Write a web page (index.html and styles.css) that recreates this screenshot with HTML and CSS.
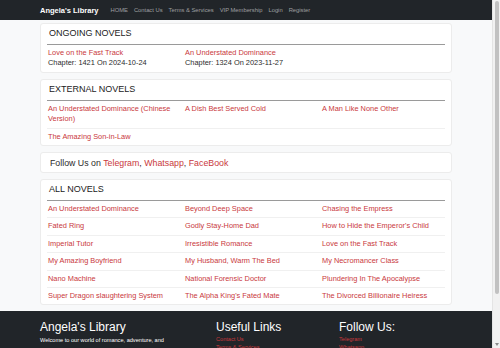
FILE: index.html
```html
<!DOCTYPE html>
<html lang="en">
<head>
    <meta charset="UTF-8">
    <meta name="viewport" content="width=device-width, initial-scale=1.0">
    <title>Angela's Library</title>
    <link rel="stylesheet" href="styles.css">
</head>
<body>

    <nav class="topbar">
        <div class="container topbar-inner">
            <a class="brand" href="#">Angela's Library</a>
            <div class="nav-links">
                <a href="#">HOME</a>
                <a href="#">Contact Us</a>
                <a href="#">Terms &amp; Services</a>
                <a href="#">VIP Membership</a>
                <a href="#">Login</a>
                <a href="#">Register</a>
            </div>
        </div>
    </nav>

    <main class="container">
        <section class="card">
            <h2 class="card-title">ONGOING NOVELS</h2>
            <div class="novel-grid">
                <div class="cell">
                    <a href="#">Love on the Fast Track</a>
                    <div class="chapter">Chapter: 1421 On 2024-10-24</div>
                </div>
                <div class="cell">
                    <a href="#">An Understated Dominance</a>
                    <div class="chapter">Chapter: 1324 On 2023-11-27</div>
                </div>
            </div>
        </section>

        <section class="card">
            <h2 class="card-title">EXTERNAL NOVELS</h2>
            <div class="novel-grid lined">
                <div class="cell"><a href="#">An Understated Dominance (Chinese Version)</a></div>
                <div class="cell"><a href="#">A Dish Best Served Cold</a></div>
                <div class="cell"><a href="#">A Man Like None Other</a></div>
                <div class="cell last"><a href="#">The Amazing Son-in-Law</a></div>
            </div>
        </section>

        <section class="card follow">
            Follow Us on <a href="#">Telegram</a>, <a href="#">Whatsapp</a>, <a href="#">FaceBook</a>
        </section>

        <section class="card">
            <h2 class="card-title">ALL NOVELS</h2>
            <div class="novel-grid lined">
                <div class="cell"><a href="#">An Understated Dominance</a></div>
                <div class="cell"><a href="#">Beyond Deep Space</a></div>
                <div class="cell"><a href="#">Chasing the Empress</a></div>
                <div class="cell"><a href="#">Fated Ring</a></div>
                <div class="cell"><a href="#">Godly Stay-Home Dad</a></div>
                <div class="cell"><a href="#">How to Hide the Emperor's Child</a></div>
                <div class="cell"><a href="#">Imperial Tutor</a></div>
                <div class="cell"><a href="#">Irresistible Romance</a></div>
                <div class="cell"><a href="#">Love on the Fast Track</a></div>
                <div class="cell"><a href="#">My Amazing Boyfriend</a></div>
                <div class="cell"><a href="#">My Husband, Warm The Bed</a></div>
                <div class="cell"><a href="#">My Necromancer Class</a></div>
                <div class="cell"><a href="#">Nano Machine</a></div>
                <div class="cell"><a href="#">National Forensic Doctor</a></div>
                <div class="cell"><a href="#">Plundering In The Apocalypse</a></div>
                <div class="cell last"><a href="#">Super Dragon slaughtering System</a></div>
                <div class="cell last"><a href="#">The Alpha King's Fated Mate</a></div>
                <div class="cell last"><a href="#">The Divorced Billionaire Heiress</a></div>
            </div>
        </section>
    </main>

    <footer class="footer">
        <div class="container footer-cols">
            <div>
                <h3>Angela's Library</h3>
                <p>Welcome to our world of romance, adventure, and fantasy. Dive into captivating stories and find your next favourite novel.</p>
            </div>
            <div>
                <h3>Useful Links</h3>
                <ul>
                    <li><a href="#">Contact Us</a></li>
                    <li><a href="#">Terms &amp; Services</a></li>
                    <li><a href="#">VIP Membership</a></li>
                </ul>
            </div>
            <div>
                <h3>Follow Us:</h3>
                <ul>
                    <li><a href="#">Telegram</a></li>
                    <li><a href="#">Whatsapp</a></li>
                    <li><a href="#">FaceBook</a></li>
                </ul>
            </div>
        </div>
        <p class="copyright">© 2024 Angela's Library. All rights reserved.</p>
    </footer>

    <!-- window scrollbar, drawn since the headless browser hides it -->
    <div class="scrollbar">
        <div class="scroll-thumb"></div>
        <div class="scroll-arrow"></div>
    </div>

</body>
</html>
```

FILE: styles.css
```css
:root {
    --dark: #212529;
    --red: #c9383c;
    --text: #2b2b2b;
    --page: #f8f9fa;
    --line: #f0f0f0;
}

body {
    margin: 0 8px 0 0;
    font-family: "Liberation Sans", Arial, sans-serif;
    background: var(--page);
    color: var(--text);
}

a {
    color: var(--red);
    text-decoration: none;
}

.container {
    width: 412px;
    margin: 0 auto;
}

/* top navigation */
.topbar {
    background: var(--dark);
    height: 20px;
}

.topbar-inner {
    display: flex;
    align-items: center;
    height: 100%;
}

.brand {
    color: #fff;
    font-weight: bold;
    font-size: 7.5px;
    margin-right: 12px;
}

.nav-links {
    display: flex;
    gap: 6px;
}

.nav-links a {
    color: rgba(255,255,255,0.55);
    font-size: 5.8px;
}

/* cards */
main {
    padding-top: 3px;
}

.card {
    background: #fff;
    border: 1px solid #ececec;
    border-radius: 3px;
    padding: 0 6px;
    margin-bottom: 6px;
}

.card-title {
    font-size: 9px;
    font-weight: normal;
    line-height: 12px;
    margin: 0;
    padding: 3px 0 5px 2px;
    color: #222;
    border-bottom: 1px solid #9a9a9a;
}

.novel-grid {
    display: grid;
    grid-template-columns: 137px 137px 1fr;
    font-size: 7.4px;
    line-height: 10.4px;
}

.cell {
    padding: 3px 6px 3px 1px;
}

.lined .cell {
    border-bottom: 1px solid var(--line);
}

.lined .cell.last {
    border-bottom: none;
}

.chapter {
    color: var(--text);
}

.follow {
    font-size: 8.8px;
    line-height: 12px;
    padding: 3.5px 9px;
}

/* footer */
.footer {
    background: var(--dark);
    color: #fff;
    margin-top: 6px;
    padding-top: 9px;
}

.footer-cols {
    display: grid;
    grid-template-columns: 176px 123px 1fr;
}

.footer h3 {
    font-size: 12px;
    font-weight: normal;
    line-height: 14px;
    margin: 0 0 1px;
}

.footer p {
    font-size: 5.6px;
    line-height: 10px;
    margin: 0;
    padding-right: 40px;
}

.footer ul {
    list-style: none;
    margin: 0;
    padding: 0;
    font-size: 5.6px;
    line-height: 8px;
}

.copyright {
    text-align: center;
    font-size: 5.6px;
    color: rgba(255,255,255,0.6);
    margin: 0;
    padding: 20px 0 14px;
}

/* scrollbar */
.scrollbar {
    position: fixed;
    top: 0;
    right: 0;
    width: 8px;
    height: 100%;
    background: #f1f1f1;
    border-left: 1px solid #e4e4e4;
    box-sizing: border-box;
}

.scroll-thumb {
    margin: 1px 1px 0 2px;
    height: 293px;
    background: #c1c1c1;
    border-radius: 2px;
}

.scroll-arrow {
    position: absolute;
    bottom: 2px;
    left: 2px;
    width: 0;
    height: 0;
    border-left: 2px solid transparent;
    border-right: 2px solid transparent;
    border-top: 3px solid #8a8a8a;
}
```
